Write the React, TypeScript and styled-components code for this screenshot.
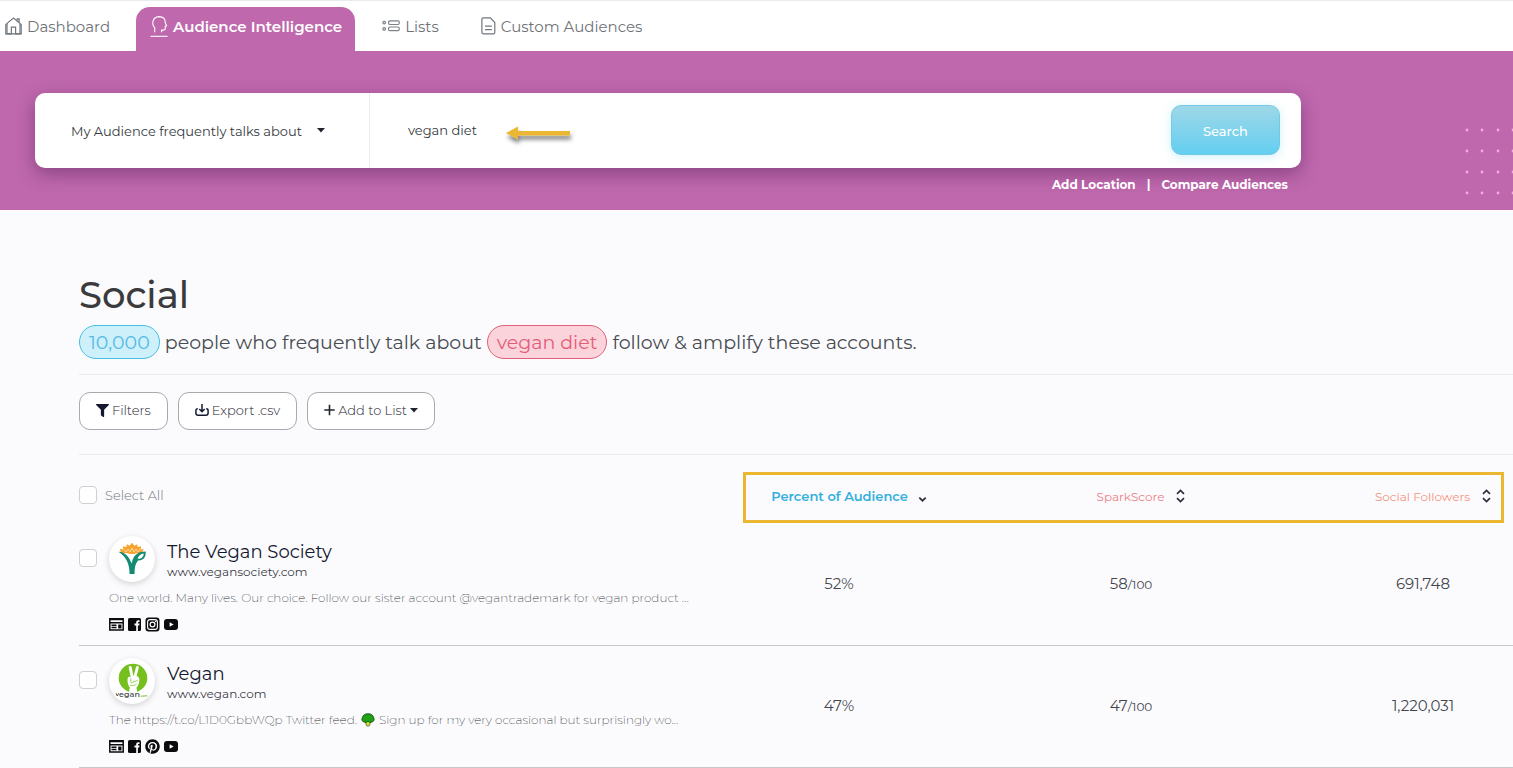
import React from "react";
import styled, { createGlobalStyle, css } from "styled-components";
import { FaFilter, FaPinterest } from "react-icons/fa";

const GlobalStyle = createGlobalStyle`
  *, *::before, *::after { box-sizing: border-box; }
  body {
    margin: 0;
    background: #fbfbfd;
    color: #343a40;
    font-family: Montserrat, Inter, "Open Sans", sans-serif;
    font-size: 13px;
    overflow-x: hidden;
  }
  button, input, select { font-family: inherit; }
`;

const Nav = styled.nav`
  display: flex;
  align-items: flex-end;
  height: 51px;
  background: #fff;
  border-top: 1px solid #ebebed;
`;

const NavTab = styled.a<{ $active?: boolean }>`
  display: flex;
  align-items: center;
  gap: 5px;
  height: 44px;
  padding: 0 20px 6px 22px;
  color: #6f7378;
  font-size: 15px;
  text-decoration: none;
  white-space: nowrap;
  svg { flex: none; }
  &:first-child { padding-left: 5px; padding-right: 26px; }
  &:nth-child(3) { padding-left: 27px; }
  ${(p) =>
    p.$active &&
    css`
      padding: 0 13px 6px 14px;
      background: #bf68ad;
      border-radius: 14px 14px 0 0;
      color: #fff;
      font-weight: 600;
    `}
`;

const Hero = styled.header`
  position: relative;
  padding: 42px 212px 18px 35px;
  background: #bf68ad;
`;

const Dots = styled.svg`
  position: absolute;
  right: 0;
  bottom: 15px;
`;

const SearchCard = styled.form`
  display: flex;
  align-items: center;
  height: 75px;
  padding-right: 21px;
  background: #fff;
  border-radius: 10px;
  box-shadow: 0 6px 18px rgba(70, 25, 80, 0.45);
`;

const TopicPicker = styled.div`
  display: flex;
  align-items: center;
  align-self: stretch;
  width: 335px;
  padding-left: 36px;
  border-right: 1px solid #ececf0;
`;

const TopicSelect = styled.select`
  appearance: none;
  width: 246px;
  padding: 0;
  border: 0;
  background: transparent;
  color: #343a40;
  font-size: 13px;
`;

const QueryField = styled.div`
  position: relative;
  flex: 1;
  padding-left: 38px;
`;

const QueryInput = styled.input`
  width: 100%;
  padding: 0 0 2px;
  border: 0;
  outline: 0;
  background: transparent;
  color: #343a40;
  font-size: 13px;
`;

const Arrow = styled.svg`
  position: absolute;
  left: 134px;
  top: 1px;
`;

const SearchButton = styled.button`
  align-self: flex-start;
  width: 109px;
  height: 50px;
  margin-top: 12px;
  padding: 2px 0 0;
  border: 1px solid #72cbe6;
  border-radius: 10px;
  background: linear-gradient(#9ed7e8, #64cff0);
  box-shadow: 0 2px 10px rgba(100, 207, 240, 0.3);
  color: #fff;
  font-size: 13px;
  font-weight: 500;
`;

const HeroLinks = styled.div`
  display: flex;
  justify-content: flex-end;
  gap: 11px;
  padding: 9px 13px 0 0;
  color: #fff;
  font-size: 12px;
  font-weight: 700;
  line-height: 15px;
`;

const HeroLink = styled.a`
  color: inherit;
  text-decoration: none;
`;

const Main = styled.main`
  padding: 64px 0 0 79px;
`;

const Title = styled.h1`
  margin: 0;
  color: #3b3b3d;
  font-size: 37px;
  font-weight: 500;
  line-height: 42px;
`;

const Summary = styled.p`
  display: flex;
  align-items: baseline;
  gap: 5px;
  margin: 9px 0 15px;
  color: #484c51;
  font-size: 19px;
  font-weight: 400;
  line-height: 31px;
  white-space: nowrap;
`;

const Pill = styled.span<{ $tone: "blue" | "red" }>`
  padding: 1px 9px 0;
  border: 1px solid ${(p) => (p.$tone === "blue" ? "#46bfe4" : "#e0607c")};
  border-radius: 17px;
  background: ${(p) => (p.$tone === "blue" ? "#cdf0fb" : "#fbd3da")};
  color: ${(p) => (p.$tone === "blue" ? "#55bbe4" : "#e35c79")};
`;

const Toolbar = styled.div`
  display: flex;
  gap: 10px;
  padding: 17px 0 24px;
  border-top: 1px solid #ebebef;
  border-bottom: 1px solid #ebebef;
`;

const ToolButton = styled.button`
  display: flex;
  align-items: center;
  gap: 3px;
  height: 38px;
  padding: 0 16px 2px;
  border: 1px solid #a9a9b0;
  border-radius: 11px;
  background: #fff;
  color: #1c2230;
  font-size: 13px;
  font-weight: 300;
`;

const TableArea = styled.div`
  position: relative;
`;

const Highlight = styled.div`
  position: absolute;
  top: 17px;
  right: 9px;
  width: 761px;
  height: 51px;
  border: 3px solid #ebb731;
  pointer-events: none;
`;

const Table = styled.table`
  width: 100%;
  table-layout: fixed;
  border-collapse: separate;
  border-spacing: 0;
`;

const MetricCol = styled.col<{ $last?: boolean }>`
  width: ${(p) => (p.$last ? 236 : 292)}px;
`;

const HeadCell = styled.th<{ $last?: boolean; $metric?: boolean }>`
  height: 69px;
  padding: ${(p) => (p.$metric ? `12px 0 0 ${p.$last ? 76 : 20}px` : "10px 0 0")};
  text-align: ${(p) => (p.$metric ? "center" : "left")};
  font-weight: 400;
`;

const SelectAll = styled.label`
  display: flex;
  align-items: center;
  gap: 8px;
  color: #74777d;
  font-size: 13px;
  font-weight: 300;
`;

const Checkbox = styled.input`
  appearance: none;
  flex: none;
  width: 18px;
  height: 18px;
  margin: 0;
  border: 1px solid #cfcfd4;
  border-radius: 4px;
  background: #fff;
`;

const SortButton = styled.button<{ $color: string; $bold?: boolean }>`
  display: inline-flex;
  align-items: center;
  gap: ${(p) => (p.$bold ? 10 : 12)}px;
  padding: 0;
  border: 0;
  background: none;
  color: ${(p) => p.$color};
  font-size: ${(p) => (p.$bold ? 13 : 12)}px;
  font-weight: ${(p) => (p.$bold ? 600 : 400)};
  white-space: nowrap;
`;

const Cell = styled.td<{ $last?: boolean }>`
  padding: 0 0 2px ${(p) => (p.$last ? 56 : 0)}px;
  border-bottom: 1px solid #c6c6cb;
  color: #43474d;
  font-size: 15px;
  text-align: center;
`;

const AccountCell = styled.td`
  padding: 12px 0 13px;
  border-bottom: 1px solid #c6c6cb;
`;

const Small = styled.small`
  font-size: 12px;
`;

const Account = styled.div`
  display: grid;
  grid-template-columns: 18px 1fr;
  column-gap: 12px;
  ${Checkbox} { margin-top: 13px; }
`;

const Identity = styled.div`
  display: flex;
  gap: 12px;
`;

const Avatar = styled.span`
  display: flex;
  align-items: center;
  justify-content: center;
  width: 46px;
  height: 46px;
  border-radius: 50%;
  background: #fff;
  box-shadow: 0 2px 6px rgba(0, 0, 0, 0.16);
`;

const Name = styled.h2`
  margin: 5px 0 0;
  color: #14192f;
  font-size: 18px;
  font-weight: 400;
  line-height: 22px;
`;

const Site = styled.a`
  display: block;
  color: #3c4048;
  font-size: 12px;
  line-height: 18px;
  text-decoration: none;
`;

const Bio = styled.p`
  display: flex;
  align-items: center;
  gap: 4px;
  margin: 7px 0 10px;
  color: #2c2f34;
  font-size: 12px;
  font-weight: 200;
  line-height: 18px;
  white-space: nowrap;
`;

const Socials = styled.div`
  display: flex;
  align-items: center;
  gap: 4px;
  height: 15px;
  color: #0b0b0d;
`;

const Caret = () => (
  <svg width="8" height="5" viewBox="0 0 8 5" aria-hidden>
    <path d="M0 0h8L4 4.4z" fill="#20242c" />
  </svg>
);

const HouseIcon = () => (
  <svg width="17" height="18" viewBox="0 0 17 18" fill="none" stroke="#70767d" strokeWidth="1.2" aria-hidden>
    <path d="M.6 7.6 8.5 1l7.900 6.600M2 6.800V16.800h4.400V10.200h4.200v6.600H15V6.800M12.200 3.600V1.800h1.900v3.400" />
    <path d="M.8 7.600v9.200h15.400V7.600" />
  </svg>
);

const HeadIcon = () => (
  <svg width="18" height="22" viewBox="0 0 18 22" fill="none" stroke="#fff" strokeWidth="1.1" aria-hidden>
    <path d="M4.700 17.300V12.600C1.600 9.500 2 2 9 1.600c4.800 0 6.400 3 6.200 6l1.400 3.200-1.400.6v2.500c0 .9-.6 1.200-3.600 1.200v2.200" />
    <path d="M.5 21.300h17" />
  </svg>
);

const ListIcon = () => (
  <svg width="18" height="12" viewBox="0 0 18 12" fill="none" stroke="#7d8288" strokeWidth="1.200" aria-hidden>
    <circle cx="2.200" cy="2.600" r="1.300" />
    <circle cx="2.200" cy="8.900" r="1.300" />
    <rect x="6.600" y=".8" width="10.600" height="3.700" rx="1.200" />
    <rect x="6.600" y="7" width="10.600" height="3.700" rx="1.200" />
  </svg>
);

const DocumentIcon = () => (
  <svg width="15" height="18" viewBox="0 0 15 18" fill="none" stroke="#70767d" strokeWidth="1.200" aria-hidden>
    <path d="M9.300.8H2.600C1.500.8.900 1.400.9 2.500v12.700c0 1.100.6 1.700 1.700 1.700h9.500c1.100 0 1.700-.6 1.700-1.700V5.600zM4 9.100h6.800M4 12.600h6.800" />
  </svg>
);

const ExportIcon = () => (
  <svg width="14" height="14" viewBox="0 0 14 14" fill="none" stroke="#14192f" strokeWidth="1.500" aria-hidden>
    <path d="M2.800 5.800C1.500 5.800.9 6.400.9 7.500V10c0 1.500.8 2.300 2.300 2.300h7.600c1.500 0 2.300-.8 2.300-2.300V7.500c0-1.100-.6-1.700-1.900-1.700M7 1v7.400M4.300 6 7 8.700 9.700 6" />
  </svg>
);

const PlusIcon = () => (
  <svg width="11" height="12" viewBox="0 0 11 12" stroke="#20242c" strokeWidth="1.600" aria-hidden>
    <path d="M5.500.8v10.400M.3 6h10.400" />
  </svg>
);

const SortIcon = ({ down }: { down?: boolean }) => (
  <svg width="9" height="14" viewBox="0 0 9 14" fill="none" stroke="#2b2f3c" strokeWidth="1.700" aria-hidden>
    {!down && <path d="M1 4.800 4.500 1.400 8 4.800" />}
    <path d={down ? "M1.300 8.600 4.500 11.700 7.700 8.600" : "M1 9.200 4.500 12.600 8 9.200"} />
  </svg>
);

const VeganSocietyLogo = () => (
  <svg width="30" height="36" viewBox="0 0 30 36" aria-hidden>
    <path d="M4 12 2.800 7.800 6.500 8.600 5.800 5.200 9.400 6 9.800 3.200 12.600 4.800 15 1.800 17.400 4.800 20.200 3.200 20.600 6l3.600-.8-.7 3.400 3.300-.6-2 4c-2 1-4-.6-6 .4-2 .9-5.600.9-7.600 0-2-1-5 .6-7.200-.4z" fill="#f8a32f" />
    <path d="m7 9 2 2 2-3 2 3 2-4 2 4 2-3 2 3 2-3" fill="none" stroke="#fde5ae" strokeWidth=".8" />
    <path d="M1.500 10.800c6 0 9.800 4 13.200 11.700C16 15 20 10.600 28.600 10.600c.5 5.500-2 9.200-7.600 8.900-2.800 3.700-3.400 7.400-3.400 13.500h-5C12.700 23 9 15.500 1.500 10.800z" fill="#138a72" />
    <path d="M20.500 17.800c1-3 3-4.800 6.200-5.300 0 3.300-2.200 5.500-6.200 5.300z" fill="#fff" />
  </svg>
);

const VeganLogo = () => (
  <svg width="36" height="38" viewBox="-1 0 36 38" aria-hidden>
    <circle cx="18" cy="16" r="14.300" fill="#75c01d" />
    <path d="m15.200 5.400 2.100 10.400M22.400 5.400l-2.800 10.400" stroke="#fff" strokeWidth="2.900" strokeLinecap="round" />
    <path d="M12.600 16.400c.6-1.800 2-2 3-1.200l5.800-1.200c2.300.4 3 2 2.900 4.200-.1 3-.9 5.400-2.800 7.200l.6 4.600c-2.600.9-5.400.9-8 0l.6-4.600c-1.600-2.300-2.500-5.600-2.100-9z" fill="#fff" />
    <path d="M15.800 16.200v4.300c1.400.8 2.800.2 2.800-1.700M19 19.200c1.400.4 2.800.1 3.600-1.200M15 23.200c2.400.8 4.800.4 6.600-1.200" fill="none" stroke="#75c01d" strokeWidth=".7" />
    <path d="M1 31.200 2.300 34l1.400-2.800" fill="none" stroke="#55565a" strokeWidth="1" />
    <text x="4" y="35" fontSize="8" fontWeight="600" fill="#55565a">egan</text>
    <text x="25" y="35" fontSize="3" fontWeight="600" fill="#75c01d">.com</text>
  </svg>
);

const Broccoli = () => (
  <svg width="14" height="14" viewBox="0 0 15 15" aria-hidden>
    <path d="M4.600 8.500h5.800l-1.200 4.900c-.9.800-2.500.8-3.400 0z" fill="#d7e23c" stroke="#37510f" strokeWidth=".8" />
    <path d="M4.400 9.900C1.400 9.700.2 7.200 1.400 5 2 2 5 .6 7.500.9c3-.3 5.500 1.400 6.100 4.100 1.200 2.200 0 4.700-3 4.900-1.200.7-2.200-.6-3.100-.8-.9.200-1.900 1.500-3.100.8z" fill="#1fa015" stroke="#0b4d0e" strokeWidth=".9" />
  </svg>
);

const WebsiteIcon = () => (
  <svg width="15" height="13" viewBox="0 0 15 13" aria-hidden>
    <path d="M.8.700h13.400v11.400H.8z" fill="#fff" stroke="currentColor" strokeWidth="1.500" />
    <path d="M.8 1.600h13.400M.8 4.700h13.400M2.500 7.200h5M2.500 9.600h5" stroke="currentColor" strokeWidth="1.500" />
    <path d="M9.200 6.500h3.300v4H9.200z" fill="currentColor" />
  </svg>
);

const FacebookIcon = () => (
  <svg width="13" height="13" viewBox="0 0 13 13" aria-hidden>
    <rect width="13" height="13" rx="1.500" fill="currentColor" />
    <path d="M8.200 13V7.500H6.500V5.600h1.700V4.400c0-1.500.8-2.200 2.300-2.200h1v1.800h-.9c-.5 0-.7.2-.7.700v.9h1.600l-.3 1.900H9.900V13z" fill="#fff" />
  </svg>
);

const InstagramIcon = () => (
  <svg width="15" height="15" viewBox="0 0 15 15" aria-hidden>
    <rect x=".5" y=".5" width="14" height="14" rx="3" fill="currentColor" />
    <rect x="2.600" y="2.600" width="9.800" height="9.800" rx="2.400" fill="none" stroke="#fff" strokeWidth="1.100" />
    <circle cx="7.500" cy="7.500" r="2.400" fill="none" stroke="#fff" strokeWidth="1.200" />
    <circle cx="10.600" cy="4.500" r=".8" fill="#fff" />
  </svg>
);

const YoutubeIcon = () => (
  <svg width="14" height="11" viewBox="0 0 14 11" aria-hidden>
    <rect width="14" height="11" rx="3" fill="currentColor" />
    <path d="m5.600 3.200 4 2.300-4 2.300z" fill="#fff" />
  </svg>
);

type AccountData = {
  id: string;
  name: string;
  site: string;
  bio: React.ReactNode;
  logo: React.ReactNode;
  third: React.ReactNode;
  percent: string;
  score: string;
  followers: string;
};

const accounts: AccountData[] = [
  {
    id: "vegan-society",
    name: "The Vegan Society",
    site: "www.vegansociety.com",
    bio: "One world. Many lives. Our choice. Follow our sister account @vegantrademark for vegan product ...",
    logo: <VeganSocietyLogo />,
    third: <InstagramIcon />,
    percent: "52%",
    score: "58",
    followers: "691,748",
  },
  {
    id: "vegan",
    name: "Vegan",
    site: "www.vegan.com",
    bio: (
      <>
        <span>The https://t.co/L1D0GbbWQp Twitter feed.</span>
        <Broccoli />
        <span>Sign up for my very occasional but surprisingly wo...</span>
      </>
    ),
    logo: <VeganLogo />,
    third: <FaPinterest size={15} />,
    percent: "47%",
    score: "47",
    followers: "1,220,031",
  },
];

const AccountRow = ({ data }: { data: AccountData }) => (
  <tr>
    <AccountCell>
      <Account>
        <Checkbox type="checkbox" aria-labelledby={data.id} />
        <div>
          <Identity>
            <Avatar>{data.logo}</Avatar>
            <div>
              <Name id={data.id}>{data.name}</Name>
              <Site href={`https://${data.site}`}>{data.site}</Site>
            </div>
          </Identity>
          <Bio>{data.bio}</Bio>
          <Socials>
            <WebsiteIcon />
            <FacebookIcon />
            {data.third}
            <YoutubeIcon />
          </Socials>
        </div>
      </Account>
    </AccountCell>
    <Cell>{data.percent}</Cell>
    <Cell>
      {data.score}
      <Small>/100</Small>
    </Cell>
    <Cell $last>{data.followers}</Cell>
  </tr>
);

const dotColumns = [2, 17, 33, 48];
const dotRows = [2, 23, 44, 65];

export default function App() {
  return (
    <>
      <GlobalStyle />
      <Nav>
        <NavTab href="#dashboard"><HouseIcon />Dashboard</NavTab>
        <NavTab href="#intelligence" $active><HeadIcon />Audience Intelligence</NavTab>
        <NavTab href="#lists"><ListIcon />Lists</NavTab>
        <NavTab href="#custom"><DocumentIcon />Custom Audiences</NavTab>
      </Nav>
      <Hero>
        <Dots width="48" height="67" viewBox="0 0 48 67" aria-hidden>
          {dotRows.map((y) =>
            dotColumns.map((x) => <circle key={`${x}-${y}`} cx={x} cy={y} r="1.400" fill="#f3a9e2" />)
          )}
        </Dots>
        <SearchCard onSubmit={(e) => e.preventDefault()}>
          <TopicPicker>
            <TopicSelect id="topic" aria-label="My Audience">
              <option>My Audience frequently talks about</option>
            </TopicSelect>
            <Caret />
          </TopicPicker>
          <QueryField>
            <QueryInput type="text" aria-labelledby="topic" defaultValue="vegan diet" />
            <Arrow width="72" height="26" viewBox="0 0 72 26" aria-hidden>
              <defs>
                <filter id="arrow-shadow" x="-20%" y="-50%" width="140%" height="220%">
                  <feDropShadow dx="1" dy="4" stdDeviation="2" floodColor="#000" floodOpacity=".5" />
                </filter>
              </defs>
              <path d="M2 10 14 3.500V8h52v4.500H14V16.500z" fill="#ebb731" filter="url(#arrow-shadow)" />
            </Arrow>
          </QueryField>
          <SearchButton type="submit">Search</SearchButton>
        </SearchCard>
        <HeroLinks>
          <HeroLink href="#location">Add Location</HeroLink>
          <span>|</span>
          <HeroLink href="#compare">Compare Audiences</HeroLink>
        </HeroLinks>
      </Hero>
      <Main>
        <Title>Social</Title>
        <Summary>
          <Pill $tone="blue">10,000</Pill>
          <span>people who frequently talk about</span>
          <Pill $tone="red">vegan diet</Pill>
          <span>follow &amp; amplify these accounts.</span>
        </Summary>
        <Toolbar>
          <ToolButton type="button"><FaFilter size={13} color="#14192f" />Filters</ToolButton>
          <ToolButton type="button"><ExportIcon />Export .csv</ToolButton>
          <ToolButton type="button"><PlusIcon />Add to List<Caret /></ToolButton>
        </Toolbar>
        <TableArea>
          <Table>
            <colgroup>
              <col />
              <MetricCol />
              <MetricCol />
              <MetricCol $last />
            </colgroup>
            <thead>
              <tr>
                <HeadCell>
                  <SelectAll><Checkbox type="checkbox" />Select All</SelectAll>
                </HeadCell>
                <HeadCell $metric>
                  <SortButton type="button" $color="#35afdc" $bold>Percent of Audience<SortIcon down /></SortButton>
                </HeadCell>
                <HeadCell $metric>
                  <SortButton type="button" $color="#ee8087">SparkScore<SortIcon /></SortButton>
                </HeadCell>
                <HeadCell $metric $last>
                  <SortButton type="button" $color="#f5947c">Social Followers<SortIcon /></SortButton>
                </HeadCell>
              </tr>
            </thead>
            <tbody>
              {accounts.map((a) => <AccountRow key={a.id} data={a} />)}
            </tbody>
          </Table>
          <Highlight />
        </TableArea>
      </Main>
    </>
  );
}
